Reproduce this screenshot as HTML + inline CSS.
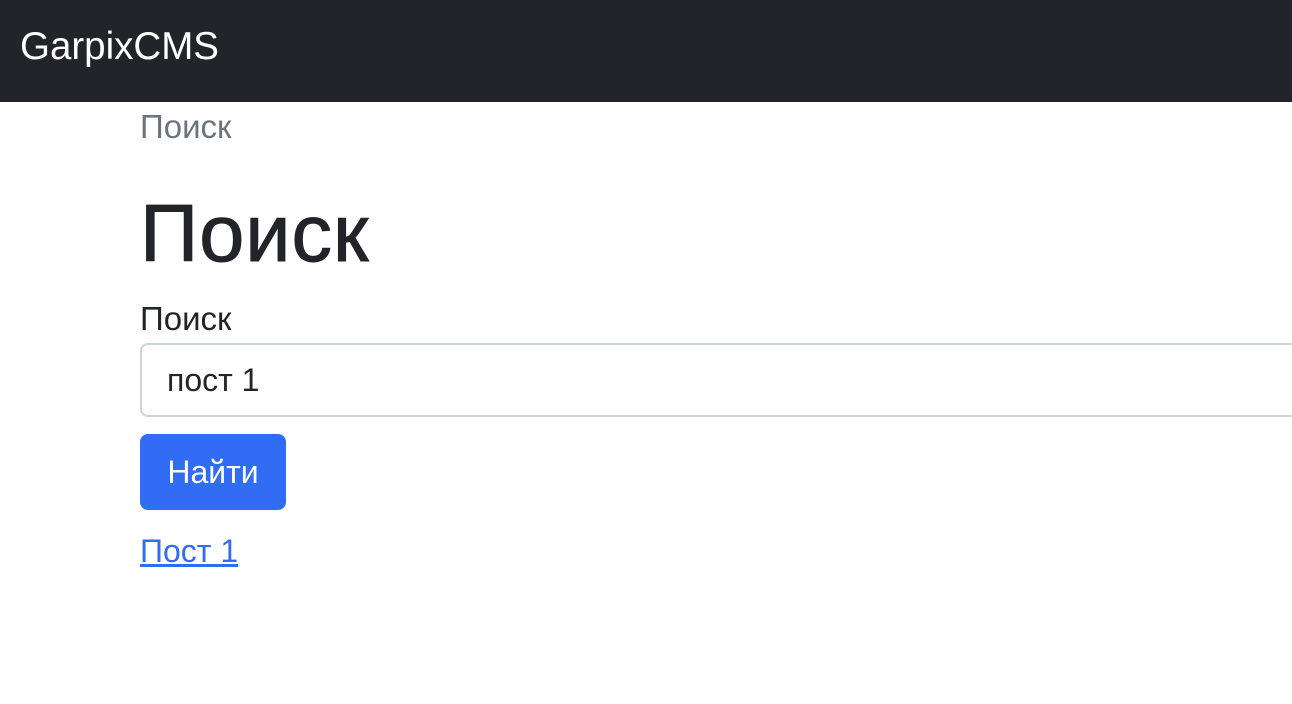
<!DOCTYPE html>
<html><head><meta charset="utf-8"><style>
*{box-sizing:border-box;margin:0;padding:0}
body{width:1292px;height:704px;overflow:hidden;background:#fff;font-family:"Liberation Sans","DejaVu Sans",sans-serif;color:#212529}
.nav{height:102px;background:#212529;position:relative}
.brand{position:absolute;left:20px;top:24px;font-size:38.5px;color:#fff;line-height:46px}
.wrap{position:absolute;left:140px;top:102px;width:1300px}
.bc{position:absolute;top:7px;font-size:33px;color:#6c757d;line-height:36px}
h1{position:absolute;top:87px;font-size:81px;font-weight:normal;line-height:90px;letter-spacing:1px;-webkit-text-stroke:1px #212529}
.lbl{position:absolute;top:199px;font-size:33px;line-height:36px}
.inp{position:absolute;top:241px;left:0;width:1200px;height:74px;border:2px solid #ced4da;border-radius:8px;font-size:32px;padding-left:25px;line-height:70px}
.btn{position:absolute;top:332px;left:0;width:146px;height:76px;background:#316cf4;border-radius:8px;color:#fff;font-size:32px;text-align:center;line-height:76px}
.lnk{position:absolute;top:431px;font-size:32px;color:#316cf4;text-decoration:underline;line-height:36px}
</style></head><body>
<div class="nav"><div class="brand">GarpixCMS</div></div>
<div class="wrap">
<div class="bc">Поиск</div>
<h1>Поиск</h1>
<div class="lbl">Поиск</div>
<div class="inp">пост 1</div>
<div class="btn">Найти</div>
<a class="lnk">Пост 1</a>
</div>
</body></html>
